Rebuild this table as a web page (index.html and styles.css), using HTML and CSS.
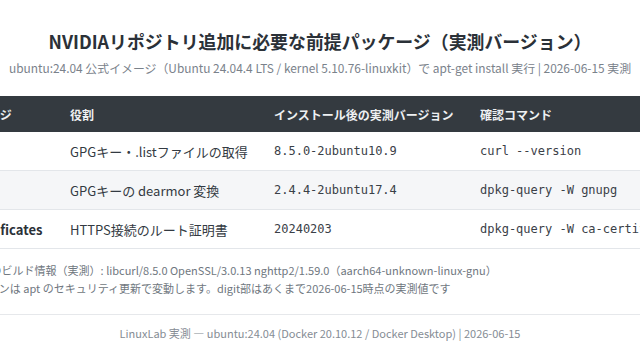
FILE: index.html
```html
<!DOCTYPE html>
<html lang="ja">
<head>
<meta charset="utf-8">
<title>NVIDIAリポジトリ追加に必要な前提パッケージ</title>
<link rel="stylesheet" href="styles.css">
</head>
<body>
<main class="page">
  <h1 class="title">NVIDIAリポジトリ追加に必要な前提パッケージ（実測バージョン）</h1>
  <p class="subtitle">ubuntu:24.04 公式イメージ（Ubuntu 24.04.4 LTS / kernel 5.10.76-linuxkit）で apt-get install 実行 | 2026-06-15 実測</p>
  <table class="pkg-table">
    <colgroup>
      <col class="c-pkg"><col class="c-role"><col class="c-ver"><col class="c-cmd">
    </colgroup>
    <thead>
      <tr><th>パッケージ</th><th>役割</th><th>インストール後の実測バージョン</th><th>確認コマンド</th></tr>
    </thead>
    <tbody>
      <tr><td class="pkg">curl</td><td>GPGキー・.listファイルの取得</td><td class="mono">8.5.0-2ubuntu10.9</td><td class="mono">curl --version</td></tr>
      <tr class="alt"><td class="pkg">gnupg</td><td>GPGキーの dearmor 変換</td><td class="mono">2.4.4-2ubuntu17.4</td><td class="mono">dpkg-query -W gnupg</td></tr>
      <tr><td class="pkg">ca-certificates</td><td>HTTPS接続のルート証明書</td><td class="mono">20240203</td><td class="mono">dpkg-query -W ca-certificates</td></tr>
    </tbody>
  </table>
  <div class="notes">
    <p>※ curl のビルド情報（実測）: libcurl/8.5.0 OpenSSL/3.0.13 nghttp2/1.59.0（aarch64-unknown-linux-gnu）</p>
    <p>バージョンは apt のセキュリティ更新で変動します。digit部はあくまで2026-06-15時点の実測値です</p>
  </div>
</main>
<footer class="footer">LinuxLab 実測 — ubuntu:24.04 (Docker 20.10.12 / Docker Desktop) | 2026-06-15</footer>
</body>
</html>
```

FILE: styles.css
```css
html, body {
  margin: 0;
  padding: 0;
  background: #ffffff;
}
body {
  font-family: "Noto Sans CJK JP", "Noto Sans", sans-serif;
  color: #333a42;
  display: flex;
  flex-direction: column;
  align-items: center;
  overflow: hidden;
}
.page {
  width: 768px;
  flex: none;
  display: flex;
  flex-direction: column;
  align-items: center;
  padding-top: 27px;
}
.title {
  margin: 0;
  font-size: 17.9px;
  line-height: 28px;
  font-weight: 700;
  color: #2b3138;
}
.subtitle {
  margin: 3px 0 0;
  font-size: 11.9px;
  line-height: 20px;
  color: #7a828b;
  white-space: nowrap;
}
.pkg-table {
  margin-top: 18px;
  width: 768px;
  border-collapse: collapse;
  table-layout: fixed;
  font-size: 13px;
}
.c-pkg { width: 118px; }
.c-role { width: 204px; }
.c-ver { width: 206px; }
.c-cmd { width: 240px; }
.pkg-table th {
  background: #343a40;
  color: #eef0f2;
  font-size: 12px;
  font-weight: 700;
  text-align: left;
  height: 36px;
  padding: 0 16px;
  white-space: nowrap;
}
.pkg-table td {
  height: 38px;
  padding: 0 16px;
  border-bottom: 1px solid #e3e6ea;
  white-space: nowrap;
  color: #333a42;
}
.pkg-table tr.alt td {
  background: #f5f6f8;
}
.pkg-table td.pkg {
  font-weight: 700;
  color: #2b3138;
}
.pkg-table td.mono {
  font-family: "DejaVu Sans Mono", "Liberation Mono", monospace;
  font-size: 12px;
  color: #3a4047;
}
.notes {
  align-self: stretch;
  margin-top: 12px;
  padding-left: 19px;
  font-size: 11px;
  line-height: 18px;
  color: #6f7780;
}
.notes p {
  margin: 0;
  white-space: nowrap;
}
.footer {
  align-self: stretch;
  margin-top: 17px;
  border-top: 1px solid #e6e8eb;
  padding-top: 11px;
  text-align: center;
  font-size: 11px;
  line-height: 14px;
  color: #858c94;
  white-space: nowrap;
  height: 40px;
}
```
